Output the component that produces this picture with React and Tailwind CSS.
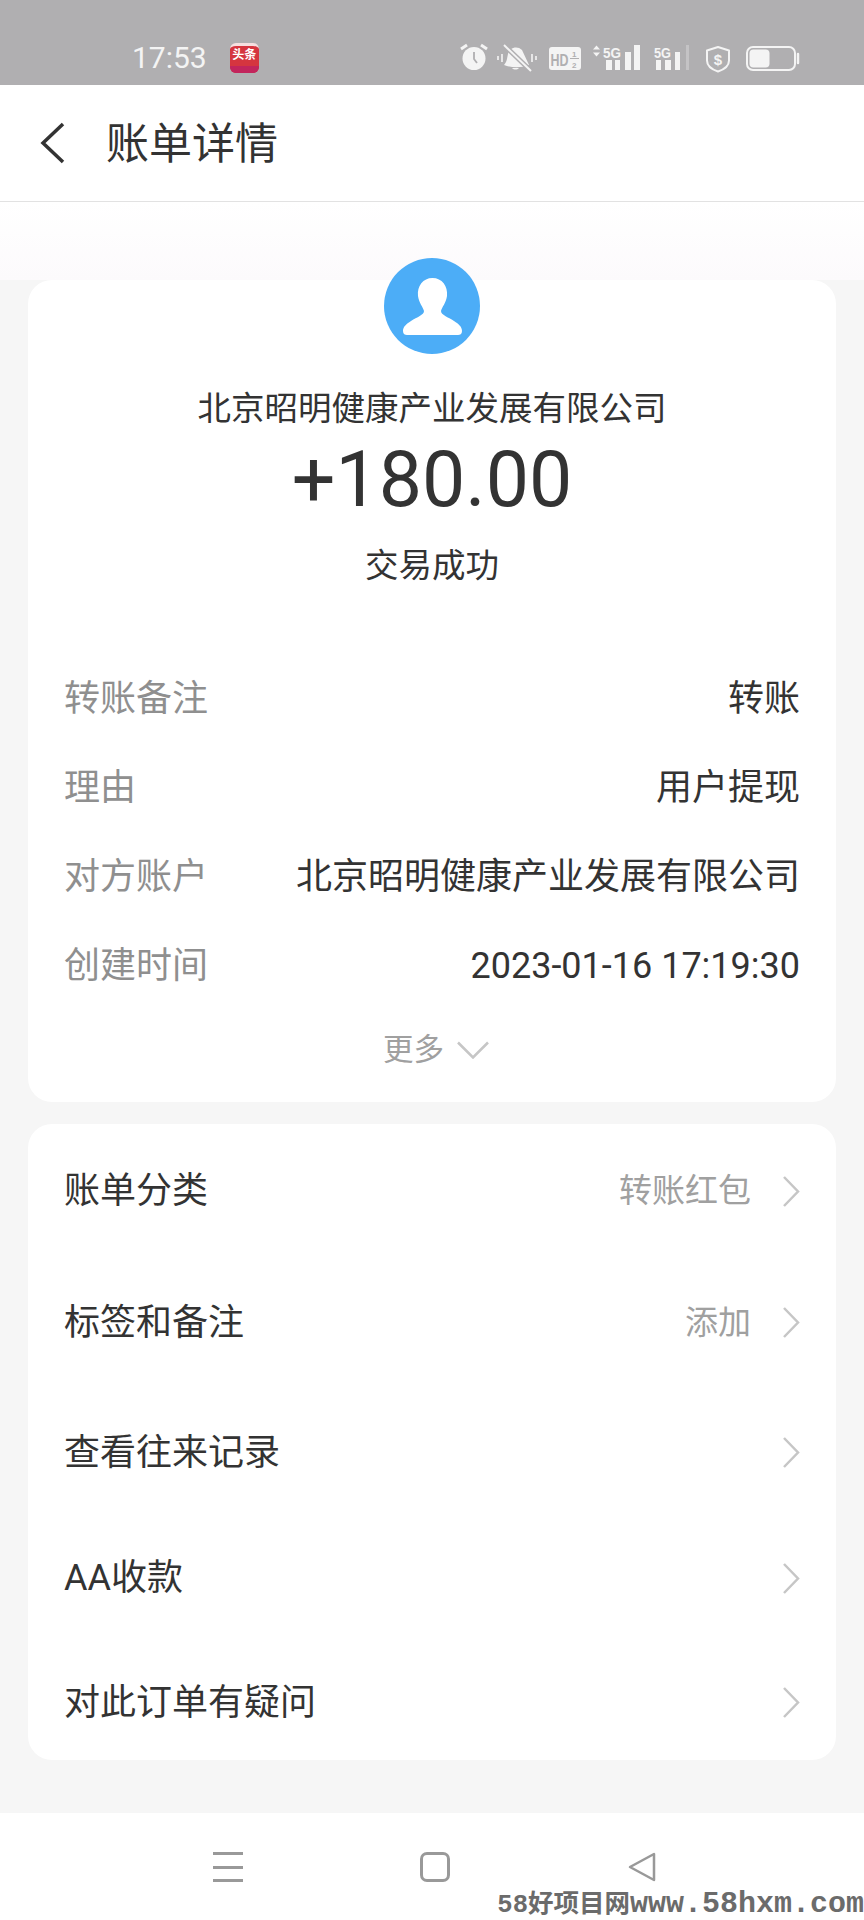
const details = [
  { label: "转账备注", value: "转账" },
  { label: "理由", value: "用户提现" },
  { label: "对方账户", value: "北京昭明健康产业发展有限公司" },
  { label: "创建时间", value: "2023-01-16 17:19:30" },
];

const actions = [
  { label: "账单分类", value: "转账红包", h: "h-[132px]" },
  { label: "标签和备注", value: "添加", h: "h-[131px]" },
  { label: "查看往来记录", h: "h-[129px]" },
  { label: "AA收款", h: "h-[122px]" },
  { label: "对此订单有疑问", h: "h-[127px]" },
];

function StatusIcons() {
  const c = "#f4f4f4";
  const bg = "#b0afb1";
  return (
    <svg width="348" height="36" viewBox="0 0 348 36" fill="none">
      {/* alarm */}
      <circle cx="18" cy="18.5" r="11.5" fill={c} />
      <path d="M18 12v7l3 4" stroke={bg} strokeWidth="1.8" />
      <path d="M5 9l6-4M31 9l-6-4" stroke={c} strokeWidth="3" />
      {/* muted bell */}
      <path d="M48 25c3-3 3-7 4-11 1-6 9-9 14-4l7 15c-7 3-18 3-25 0z" fill={c} />
      <path d="M56 28c2 2 5 2 7 0z" fill={c} />
      <path d="M49 6l26 25" stroke={bg} strokeWidth="5" />
      <path d="M48 5l27 26" stroke={c} strokeWidth="2" />
      <path d="M42 16v4M46 14v8M76 14v8M80 16v4" stroke={c} strokeWidth="1.6" />
      {/* HD 1/2 badge */}
      <rect x="93" y="7" width="32" height="23" rx="3" fill={c} />
      <text x="94.5" y="25.5" fontSize="17" fontWeight="700" fontFamily="'Liberation Sans', sans-serif" fill={bg} textLength="18" lengthAdjust="spacingAndGlyphs">HD</text>
      <text x="116" y="16.5" fontSize="8" fontWeight="700" fontFamily="'Liberation Sans', sans-serif" fill={bg}>1</text>
      <text x="116" y="28" fontSize="8" fontWeight="700" fontFamily="'Liberation Sans', sans-serif" fill={bg}>2</text>
      <path d="M114 18.5h9" stroke={bg} strokeWidth="1" />
      {/* signal 1 */}
      <path d="M137 9.5l3.5-4 3.5 4zM137 12.5l3.5 4 3.5-4z" fill={c} />
      <text x="147" y="18" fontSize="15" fontWeight="700" fontFamily="'Liberation Sans', sans-serif" fill={c} textLength="18" lengthAdjust="spacingAndGlyphs">5G</text>
      <path d="M150 20h6v10h-6zM159 20h5v10h-5zM169 12h6v18h-6zM178 5h6v25h-6z" fill={c} />
      {/* signal 2 */}
      <text x="198" y="18" fontSize="15" fontWeight="700" fontFamily="'Liberation Sans', sans-serif" fill={c} textLength="17" lengthAdjust="spacingAndGlyphs">5G</text>
      <path d="M200 20h5v10h-5zM209 20h6v10h-6zM219 12h5v18h-5z" fill={c} />
      <path d="M230 5h3v25h-3z" fill="#c4c3c5" />
      {/* shield */}
      <path d="M262 7l11 3.5v10c0 5-5 9-11 11-6-2-11-6-11-11v-10z" stroke={c} strokeWidth="2" strokeLinejoin="round" />
      <text x="262" y="24.5" fontSize="15" fontWeight="700" textAnchor="middle" fontFamily="'Liberation Sans', sans-serif" fill={c}>$</text>
      {/* battery */}
      <rect x="291" y="7" width="48" height="23" rx="6" stroke={c} strokeWidth="2" />
      <rect x="293.5" y="9.5" width="20" height="18" rx="4" fill={c} />
      <path d="M342 14v9" stroke={c} strokeWidth="2.5" strokeLinecap="round" />
    </svg>
  );
}

// thin chevrons, lucide's are too fat and too short for this screen
function RowArrow() {
  return (
    <svg width="18" height="33" viewBox="0 0 18 33" fill="none" className="shrink-0">
      <path d="M2 2l14 14.5L2 31" stroke="#c6c6c6" strokeWidth="2.5" />
    </svg>
  );
}

export default function App() {
  return (
    <div className="w-[864px] h-[1920px] flex flex-col bg-[#f6f6f6] font-['Roboto','Noto_Sans_CJK_SC',sans-serif] overflow-hidden">
      <div className="h-[85px] bg-[#b0afb1] pl-[132px] pr-[60px] pt-[40px] flex items-start text-[#f4f4f4]">
        <span className="text-[30px] leading-[36px]">17:53</span>
        <div className="ml-[23px] mt-[3px] w-[29px] h-[30px] rounded-[6px] bg-[#d5353f] border-t-[3px] border-[#f6dfe0] flex flex-col items-center overflow-hidden">
          <span className="text-[12px] leading-[18px] font-bold text-white">头条</span>
          <div className="mt-auto w-full h-[7px] bg-[#c2255c]" />
        </div>
        <div className="ml-auto">
          <StatusIcons />
        </div>
      </div>

      <header className="h-[117px] bg-white border-b border-[#e2e2e2] flex items-center pl-[40px]">
        <svg width="25" height="42" viewBox="0 0 25 42" fill="none">
          <path d="M23 2L3 21l20 19" stroke="#333333" strokeWidth="3.5" />
        </svg>
        <h1 className="ml-[41px] mt-[3px] text-[43px] text-[#333333]">账单详情</h1>
      </header>

      <div className="h-[78px] bg-gradient-to-b from-white to-[#fcfafc]" />

      <div className="px-[28px] flex flex-col gap-[22px]">
        <section className="bg-white rounded-[24px] h-[822px] flex flex-col items-center relative">
          <div className="w-[96px] h-[96px] rounded-full bg-[#4cadf7] absolute top-[-22px] flex items-center justify-center">
            <svg width="59" height="57" viewBox="0 0 59 57">
              <path d="M29.5 0C39 0 45 8 44 18C43 25 39 29 38 33C38 37 45 39 51 43C56 46 59 49 59 53C59 56 57 57 55 57H4C2 57 0 56 0 53C0 49 3 46 8 43C14 39 21 37 21 33C20 29 16 25 15 18C14 8 20 0 29.5 0Z" fill="white" />
            </svg>
          </div>
          <div className="mt-[107px] text-[33.5px] leading-[44px] text-[#333333]">北京昭明健康产业发展有限公司</div>
          <div className="mt-[7px] text-[77px] leading-[84px] text-[#333333]">+180.00</div>
          <div className="mt-[22px] text-[33.5px] leading-[44px] text-[#333333]">交易成功</div>

          <div className="w-full mt-[66px] px-[36px] flex flex-col">
            {details.map((row) => (
              <div key={row.label} className="h-[89px] flex items-center justify-between text-[36px]">
                <span className="text-[#8f8f8f]">{row.label}</span>
                <span className="text-[#333333]">{row.value}</span>
              </div>
            ))}
          </div>
          <div className="mt-[17px] ml-[8px] flex items-center gap-[13px] text-[30.5px] text-[#a0a0a0]">
            更多
            <svg width="32" height="18" viewBox="0 0 32 18" fill="none">
              <path d="M1 1.5l15 15 15-15" stroke="#c6c6c6" strokeWidth="2.5" />
            </svg>
          </div>
        </section>

        <section className="bg-white rounded-[24px] h-[636px] pt-[1px] px-[36px] flex flex-col">
          {actions.map((row) => (
            <div key={row.label} className={`${row.h} shrink-0 flex items-center text-[36px] text-[#333333]`}>
              <span>{row.label}</span>
              {row.value && <span className="ml-auto mr-[31px] text-[33px] text-[#a0a0a0]">{row.value}</span>}
              <div className={row.value ? "" : "ml-auto"}>
                <RowArrow />
              </div>
            </div>
          ))}
        </section>
      </div>

      <nav className="mt-auto h-[107px] bg-white relative flex items-start pt-[39px] pl-[213px]">
        <div className="w-[30px] h-[30px] flex flex-col justify-between">
          <div className="h-[3px] bg-[#999999]" />
          <div className="h-[3px] bg-[#999999]" />
          <div className="h-[3px] bg-[#999999]" />
        </div>
        <div className="ml-[177px] w-[30px] h-[30px] rounded-[7px] border-[3px] border-[#999999]" />
        <svg width="30" height="30" viewBox="0 0 30 30" fill="none" className="ml-[177px]">
          <path d="M27 2v26L3 15z" stroke="#999999" strokeWidth="2.5" strokeLinejoin="round" />
        </svg>
        <div className="absolute right-0 bottom-0 flex items-baseline leading-[28px] font-bold text-[#6b6b6b] font-['Liberation_Mono','Noto_Sans_CJK_SC',monospace]">
          <span className="text-[25.5px]">58好项目网</span>
          <span className="text-[30px]">www.58hxm.com</span>
        </div>
      </nav>
    </div>
  );
}
